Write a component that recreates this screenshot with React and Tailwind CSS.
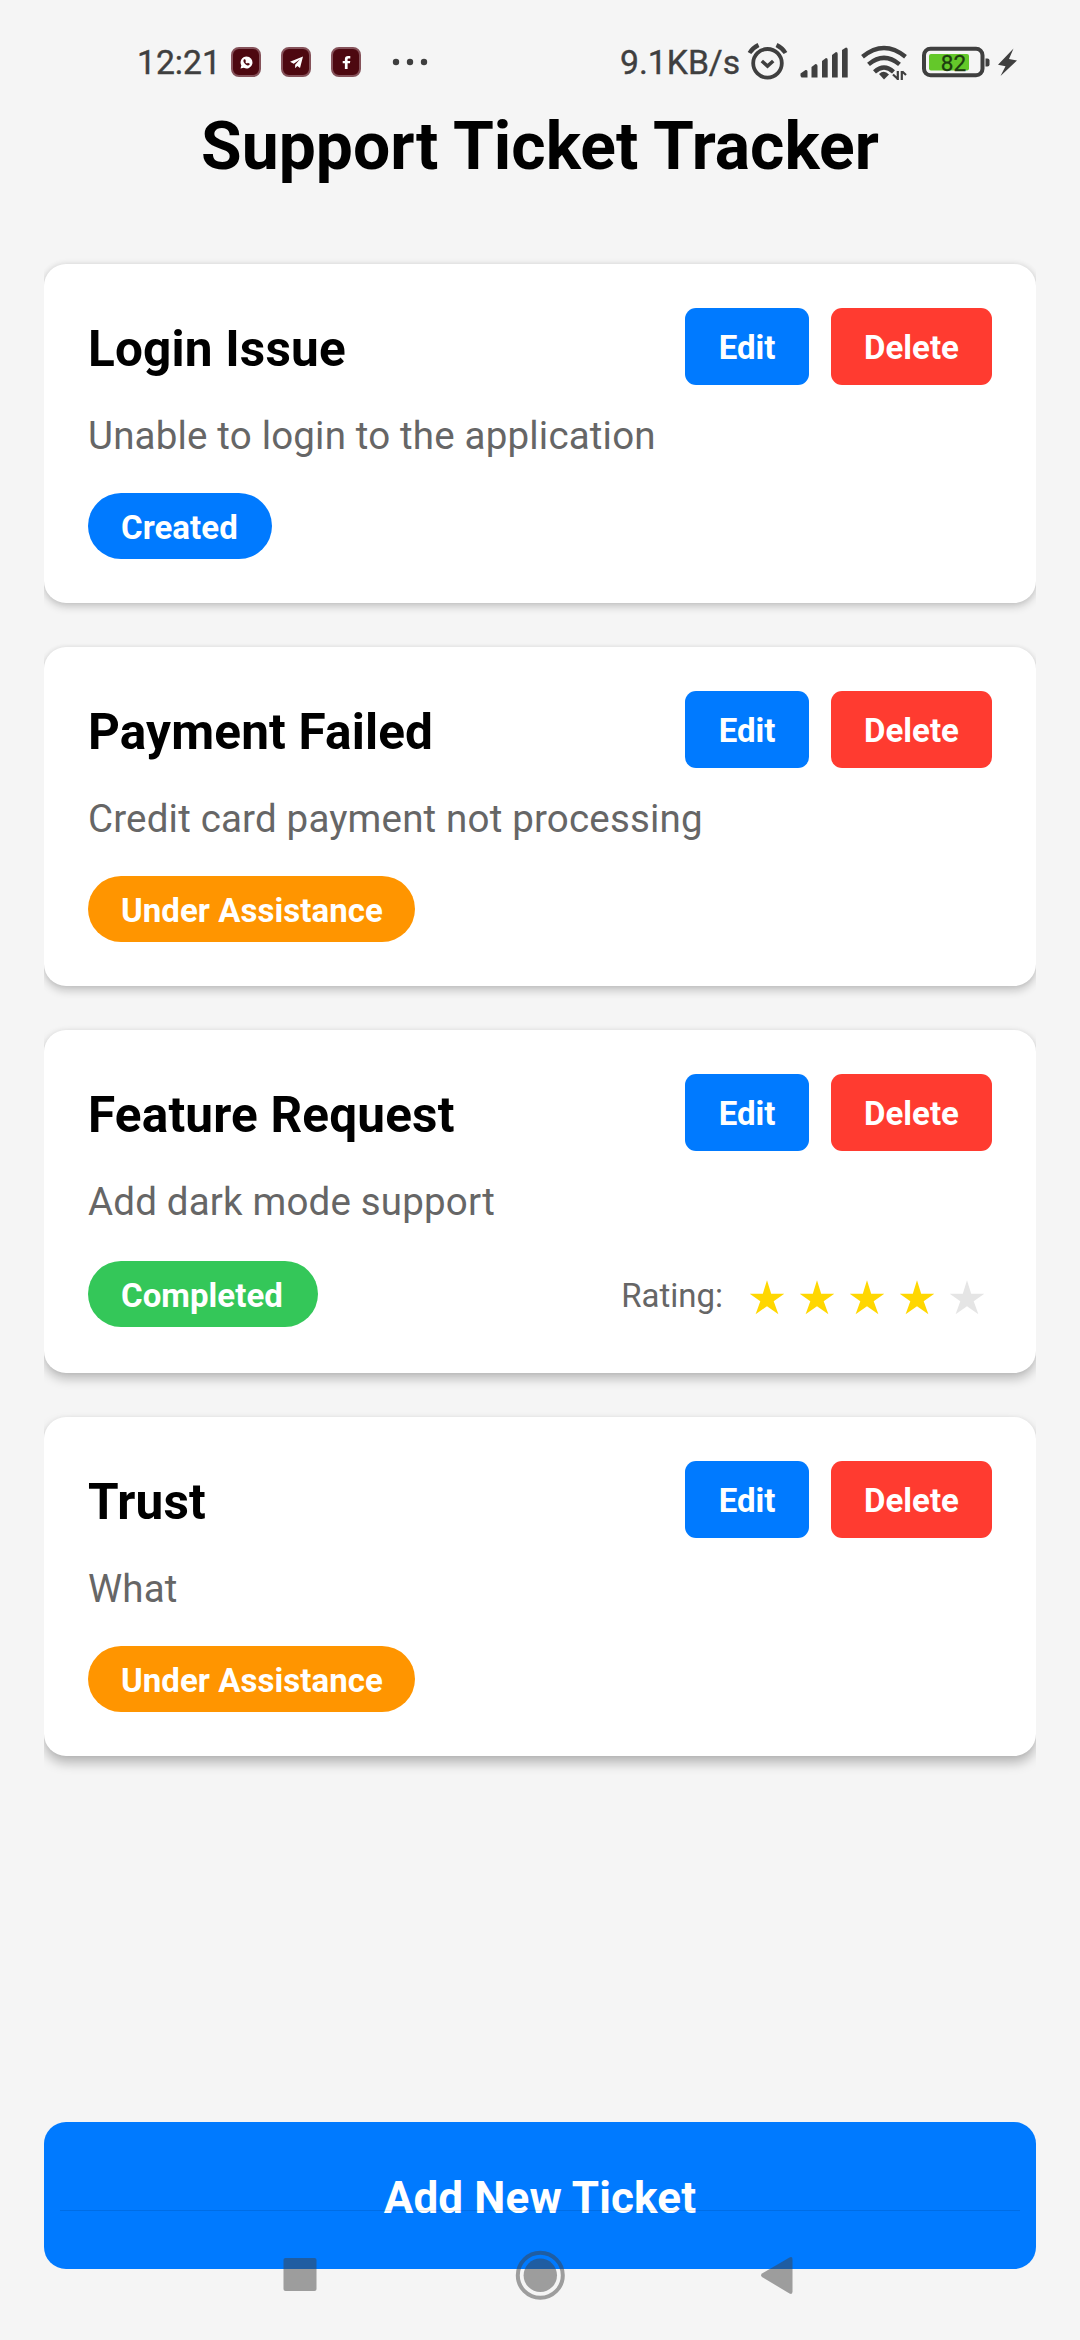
import React from "react";

const tickets = [
  {
    title: "Login Issue",
    text: "Unable to login to the application",
    status: "Created",
    badge: "w-[184px] bg-[#007aff]",
    shadow: "shadow-[0_4px_8px_rgba(0,0,0,0.17),0_0_6px_rgba(0,0,0,0.10)]",
  },
  {
    title: "Payment Failed",
    text: "Credit card payment not processing",
    status: "Under Assistance",
    badge: "w-[327px] bg-[#ff9500]",
    shadow: "shadow-[0_5px_9px_rgba(0,0,0,0.19),0_0_5px_rgba(0,0,0,0.09)]",
  },
  {
    title: "Feature Request",
    text: "Add dark mode support",
    status: "Completed",
    badge: "w-[230px] bg-[#34c759]",
    rating: 4,
    shadow: "shadow-[0_6px_11px_rgba(0,0,0,0.23),0_0_5px_rgba(0,0,0,0.07)]",
  },
  {
    title: "Trust",
    text: "What",
    status: "Under Assistance",
    badge: "w-[327px] bg-[#ff9500]",
    shadow: "shadow-[0_7px_12px_rgba(0,0,0,0.26),0_0_4px_rgba(0,0,0,0.06)]",
  },
];

function AppTile({ children }) {
  return (
    <span className="flex size-[30px] items-center justify-center rounded-[8px] border-2 border-[#85525a] bg-[#4d0810]">
      <svg viewBox="0 0 24 24" className="size-[13px]" fill="#fff">
        {children}
      </svg>
    </span>
  );
}

function StatusBar() {
  return (
    <div className="flex h-[110px] items-start text-[33.7px] leading-[40px] text-[#3f3f3f]">
      <span className="mt-[43px] ml-[137px] w-[94px] [-webkit-text-stroke:0.4px_#3f3f3f]">12:21</span>
      <div className="mt-[47px] flex gap-5">
        <AppTile>
          <path
            fillRule="evenodd"
            d="M12 1a11 11 0 1 1-5 20.800L1 23l1.500-5.500A11 11 0 0 1 12 1zM8 6C6 7 6 9 7 11.500c1.500 3 4 5 7 6 2 .5 4-.5 4-3l-3.500-2-1.500 1.500c-1.500-.5-2.500-1.500-3.200-3L11 9.500 9.500 6z"
          />
        </AppTile>
        <AppTile>
          <path d="M24 1 0 10.500l7 4L18.500 6 9.500 16v6.500l4-4 5 3.500z" />
        </AppTile>
        <AppTile>
          <path d="M9 24V13.500H5V9h4V6c0-4 2-6 6-6h4v4.500h-3c-1.500 0-2 .6-2 2V9h5l-.7 4.500H14V24z" />
        </AppTile>
      </div>
      <svg className="mt-[57px] ml-[31px]" width="36" height="10" fill="#3f3f3f">
        <circle cx="4" cy="5" r="3.200" />
        <circle cx="18" cy="5" r="3.200" />
        <circle cx="32" cy="5" r="3.200" />
      </svg>
      <span className="mt-[43px] ml-[192px] w-[127px] [-webkit-text-stroke:0.4px_#3f3f3f]">9.1KB/s</span>
      <svg className="mt-[40px]" width="280" height="44" viewBox="747 40 280 44" fill="none" stroke="#3f3f3f">
        <circle cx="767.500" cy="63.300" r="14.300" strokeWidth="3.800" />
        <path d="M761.800 61l5.700 5 5.700-5" strokeWidth="3.600" />
        <path d="M749.500 53q3-5 9-8M785.500 53q-3-5-9-8" strokeWidth="4.200" />
        <g fill="#3f3f3f" stroke="none">
          <path d="M800.500 73.500l5-3.500q2-.5 2 1.500v6h-6q-1.500-1-1-4z" />
          <path d="M811.500 67l4-3q2 0 2 2v11.500h-6z" />
          <path d="M822 61l4-3q1.700 0 1.700 2v17.500H822z" />
          <path d="M832 55l4-3q1.700 0 1.700 2v23.500H832z" />
          <path d="M842 50l4-2.500q1.700 0 1.700 2v28H842z" />
          <path d="M879 74q5-4.500 10 0.500L884 79.500z" />
        </g>
        <path d="M862.500 56.800q21.500-17.500 43 0" strokeWidth="4.400" />
        <path d="M868.500 64.400q15.500-13 31 0" strokeWidth="4.400" />
        <path d="M874.500 71.800q9.500-8.500 19 0" strokeWidth="4.400" />
        <path d="M897.800 71v9M901.800 71v9M893 74.500l4.300 4M906 75l-3.700-3.500" strokeWidth="2.200" />
        <rect x="924" y="48.800" width="58.500" height="26.500" rx="6.500" strokeWidth="4" />
        <rect x="929" y="54" width="40" height="16.500" rx="2" fill="#64c82a" stroke="none" />
        <path d="M985.500 58.500h2q2 0 2 2v4q0 2-2 2h-2z" fill="#3f3f3f" stroke="none" />
        <path d="M1013.500 48.500L998 64.800l7.500 1.500-5 9.700 16.500-15.500-8-1.500z" fill="#3f3f3f" stroke="none" />
        <text x="953.500" y="71" textAnchor="middle" fontSize="22.500" fill="#1d3b10" stroke="#1d3b10" strokeWidth="0.300">
          82
        </text>
      </svg>
    </div>
  );
}

function Star({ filled }) {
  return (
    <svg viewBox="0 0 50 70" className="h-[70px] w-[50px]" fill={filled ? "#ffd700" : "#e5e5e5"}>
      <path d="M25 21.300l4.200 13.400h13.100L31.700 42.200l4.700 13L25 47.200l-11.400 8 4.700-13L7.700 34.700h13.100z" />
    </svg>
  );
}

function TicketCard({ ticket }) {
  return (
    <article className={`rounded-[22px] bg-white p-11 ${ticket.shadow}`}>
      <div className="flex h-[77px] items-center justify-between">
        <h2 className="pt-[5px] text-[49.5px] font-bold leading-[58px] tracking-[0.17px] text-black">{ticket.title}</h2>
        <div className="flex gap-[22px] text-[33px] font-bold leading-[39px] text-white">
          <button className="h-[77px] w-[124px] rounded-[11px] bg-[#007aff] pt-0.5">Edit</button>
          <button className="h-[77px] w-[161px] rounded-[11px] bg-[#ff3b30] pt-0.5">Delete</button>
        </div>
      </div>
      <p className="mt-[26px] h-[82px] text-[38.5px] leading-[50px] tracking-[0.18px] text-[#666]">{ticket.text}</p>
      <div className="flex items-center justify-between">
        <span className={`h-[66px] whitespace-nowrap rounded-[33px] pt-[15px] pl-[33px] text-[33px] font-bold leading-[39px] tracking-[0.05px] text-white ${ticket.badge}`}>
          {ticket.status}
        </span>
        {ticket.rating && (
          <div className="flex items-center text-[33px] leading-[39px] text-[#666]">
            <span className="mr-[19px] pt-[2px]">Rating:</span>
            {[1, 2, 3, 4, 5].map((n) => (
              <Star key={n} filled={n <= ticket.rating} />
            ))}
          </div>
        )}
      </div>
    </article>
  );
}

function NavigationBar() {
  return (
    <div className="absolute inset-x-[60px] bottom-0 flex h-[130px] justify-center border-t border-black/10">
      <svg width="520" height="129" viewBox="280 2211 520 129" fill="#404040" fillOpacity="0.486">
        <rect x="283.500" y="2258" width="33" height="33" rx="2" />
        <circle cx="540.300" cy="2275.300" r="16.700" />
        <circle cx="540.300" cy="2275.300" r="22.500" fill="none" stroke="#404040" strokeOpacity="0.486" strokeWidth="4" />
        <path d="M762 2273.500L789.500 2257.500q3-1.500 3 2v32q0 3.500-3 2L762 2277q-2-1.700 0-3.500z" />
      </svg>
    </div>
  );
}

export default function App() {
  return (
    <main className="relative flex h-[2340px] w-[1080px] flex-col overflow-hidden bg-[#f5f5f5] font-['Roboto',sans-serif]">
      <StatusBar />
      <h1 className="h-[154px] pt-px text-center text-[66px] font-bold leading-[72px] text-black">Support Ticket Tracker</h1>
      <section className="mx-11 flex flex-1 flex-col gap-11 overflow-x-clip">
        {tickets.map((ticket) => (
          <TicketCard key={ticket.title} ticket={ticket} />
        ))}
      </section>
      <button className="mx-11 mb-[71px] h-[147px] rounded-[22px] bg-[#007aff] pt-1 text-[44px] font-bold tracking-[0.15px] text-white">
        Add New Ticket
      </button>
      <NavigationBar />
    </main>
  );
}
